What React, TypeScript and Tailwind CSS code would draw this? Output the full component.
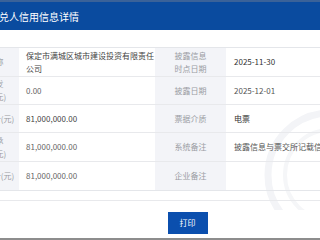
const rows = [
  { h: "h-[29px]", l1: "承兑人名称", v1: "保定市满城区城市建设投资有限责任\n公司", l2: "披露信息\n时点日期", v2: "2025-11-30", dark: true },
  { h: "h-[28px]", l1: "累计逾期发\n生额合计(元)", v1: "0.00", l2: "披露日期", v2: "2025-12-01" },
  { h: "h-[28px]", l1: "承兑余额合计(元)", v1: "81,000,000.00", l2: "票据介质", v2: "电票", dark: true },
  { h: "h-[29px]", l1: "累计逾期承\n兑发生额(元)", v1: "81,000,000.00", l2: "系统备注", v2: "披露信息与票交所记载信息一致" },
  { h: "h-[28px]", l1: "逾期余额合计(元)", v1: "81,000,000.00", l2: "企业备注", v2: "" },
];

export default function App() {
  return (
    <div className="relative h-[240px] w-[320px] overflow-hidden bg-white font-['Noto_Sans_CJK_SC',sans-serif]">
      <Watermark />
      <div className="relative -ml-[52px] flex h-[240px] w-[440px] flex-col">
        <div className="h-[2px] bg-[#3a6299]" />
        <div className="flex h-[29px] items-center bg-[#0a4b9f] pl-[41px] text-[10px] text-white">承兑人信用信息详情</div>
        <div className="h-[17px]" />
        <div className="border-y border-[#e4e6ea]">
          {rows.map((row, i) => <InfoRow row={row} last={i === rows.length - 1} key={row.l2} />)}
        </div>
        <div className="h-[9px]" />
        <div className="flex h-[39px] items-start justify-center border-t border-[#e8e9ec] pt-[11px]">
          <button className="ml-[39px] flex h-[22px] w-[40px] items-center justify-center bg-[#0b4fae] text-[8px] text-white">打印</button>
        </div>
        <div className="h-[2px] bg-[#8d8d8d]" />
      </div>
    </div>
  );
}

function InfoRow({ row, last }: { row: (typeof rows)[number]; last: boolean }) {
  return (
    <div className={`grid ${row.h} grid-cols-[71px_136px_71px_1fr] text-[8px] leading-[13px] ${last ? "" : "border-b border-[#e8e9ec]"}`}>
      <div className="flex items-center justify-center whitespace-pre-line bg-[#f3f4f8] px-[4px] text-center text-[#9a9ca3]">{row.l1}</div>
      <div className={`flex items-center whitespace-pre-line pl-[7px] ${row.dark ? "text-[#444]" : "text-[#666]"}`}>{row.v1}</div>
      <div className="flex items-center justify-center whitespace-pre-line bg-[#f3f4f8] px-[4px] text-center text-[#9a9ca3]">{row.l2}</div>
      <div className={`flex items-center whitespace-nowrap pl-[8px] ${row.dark ? "text-[#333]" : "text-[#555]"}`}>{row.v2}</div>
    </div>
  );
}

function Watermark() {
  return (
    <svg className="pointer-events-none absolute right-0 top-[60px]" width="70" height="150" viewBox="0 0 70 150">
      <circle cx="80" cy="115" r="62" fill="none" stroke="#f3f4f7" strokeWidth="7" />
      <circle cx="80" cy="115" r="45" fill="none" stroke="#f5f6f8" strokeWidth="4" />
    </svg>
  );
}
